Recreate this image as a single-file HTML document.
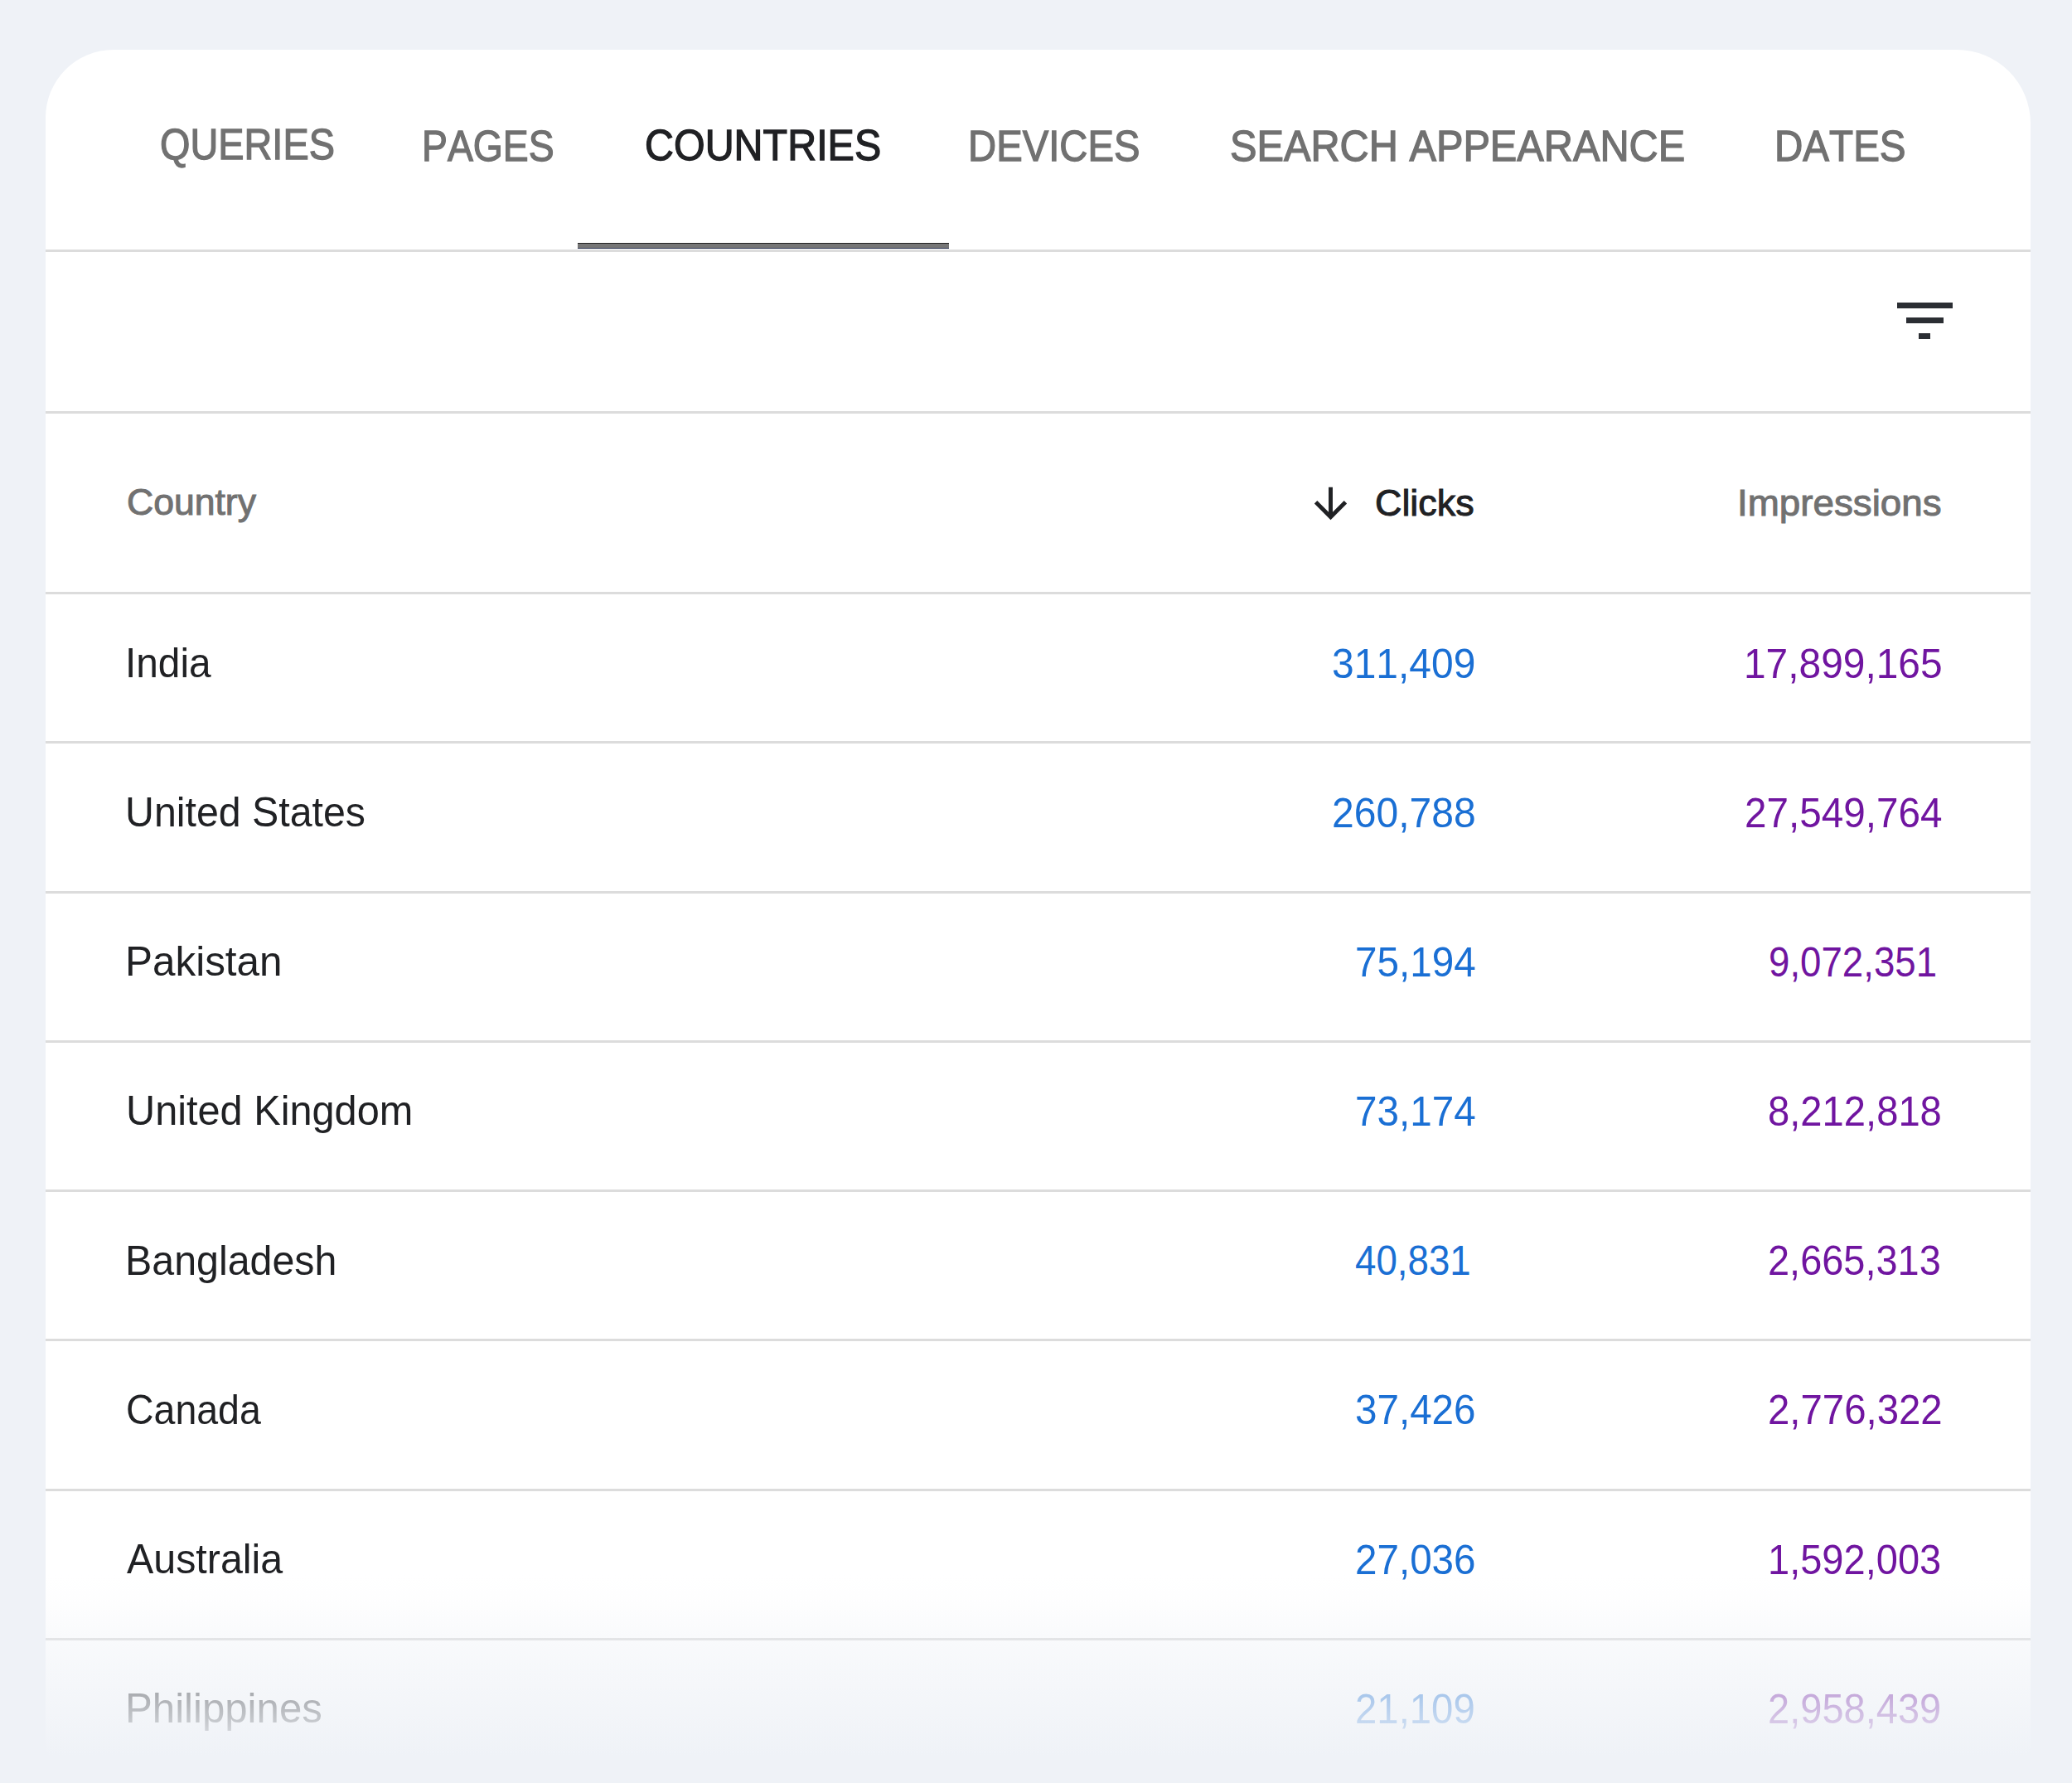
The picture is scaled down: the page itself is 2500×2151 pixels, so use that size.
<!DOCTYPE html>
<html><head><meta charset="utf-8"><title>Search Console - Countries</title>
<style>
html,body{margin:0;padding:0}
body{width:2500px;height:2151px;background:#eff2f7;position:relative;overflow:hidden;font-family:"Liberation Sans",sans-serif}
.card{position:absolute;left:55px;top:60px;width:2395px;height:2060px;background:#fff;border-radius:82px 89px 14px 14px}
.ln{position:absolute;left:55px;width:2395px;height:3px;background:#dcdcdc}
.tx{display:block;position:absolute;line-height:1;white-space:nowrap;font-kerning:none;transform-origin:0 0}
.ul{position:absolute;left:697px;top:293px;width:448px;height:5px;background:#767676;border-top:1px solid #222;border-bottom:1px solid #2b3350}
.bar{position:absolute;background:#2b2e33}
.fade{position:absolute;left:0;top:1898px;width:2500px;height:253px;background:linear-gradient(to bottom,rgba(239,242,247,0.000) 0px,rgba(239,242,247,0.080) 30px,rgba(239,242,247,0.420) 85px,rgba(239,242,247,0.660) 143px,rgba(239,242,247,0.800) 178px,rgba(239,242,247,1.000) 222px)}
</style></head><body>
<div class="card"></div>
<div class="ln" style="top:301.0px"></div><div class="ln" style="top:496.0px"></div><div class="ln" style="top:714.0px"></div><div class="ln" style="top:894.2px"></div><div class="ln" style="top:1074.5px"></div><div class="ln" style="top:1254.8px"></div><div class="ln" style="top:1435.0px"></div><div class="ln" style="top:1615.2px"></div><div class="ln" style="top:1795.5px"></div><div class="ln" style="top:1975.8px"></div>
<div class="ul"></div>
<div class="bar" style="left:2289px;top:365px;width:67px;height:7px"></div>
<div class="bar" style="left:2300px;top:383px;width:45px;height:7px"></div>
<div class="bar" style="left:2315px;top:402px;width:14px;height:7px"></div>
<svg style="position:absolute;left:1576px;top:578px" width="59" height="59" viewBox="0 0 24 24"><path fill="#202124" d="M20 12l-1.41-1.41L13 16.17V4h-2v12.17l-5.58-5.59L4 12l8 8 8-8z"/></svg>
<nav class="tabs">
<span class="tx" style="left:193.09px;top:149.35px;font-size:51.7px;color:#717171;transform:scaleX(0.9065);-webkit-text-stroke:1.3px #717171">QUERIES</span>
<span class="tx" style="left:509.31px;top:150.85px;font-size:51.7px;color:#717171;transform:scaleX(0.8966);-webkit-text-stroke:1.3px #717171">PAGES</span>
<span class="tx" style="left:778.13px;top:149.85px;font-size:51.7px;color:#202124;transform:scaleX(0.9369);-webkit-text-stroke:1.3px #202124">COUNTRIES</span>
<span class="tx" style="left:1167.66px;top:150.85px;font-size:51.7px;color:#717171;transform:scaleX(0.9143);-webkit-text-stroke:1.3px #717171">DEVICES</span>
<span class="tx" style="left:1483.76px;top:150.85px;font-size:51.7px;color:#717171;transform:scaleX(0.9420);-webkit-text-stroke:1.3px #717171">SEARCH APPEARANCE</span>
<span class="tx" style="left:2140.94px;top:150.85px;font-size:51.7px;color:#717171;transform:scaleX(0.9202);-webkit-text-stroke:1.3px #717171">DATES</span>
</nav>
<div class="thead"><span class="tx" style="left:152.51px;top:583.00px;font-size:45px;color:#717171;transform:scaleX(0.9898);-webkit-text-stroke:1.0px #717171">Country</span><span class="tx" style="left:1659.00px;top:584.20px;font-size:45px;color:#202124;transform:scaleX(0.9966);-webkit-text-stroke:1.0px #202124">Clicks</span><span class="tx" style="left:2095.95px;top:584.30px;font-size:45px;color:#717171;transform:scaleX(1.0167);-webkit-text-stroke:1.0px #717171">Impressions</span></div>
<div class="row"><span class="tx" style="left:151.18px;top:775.00px;font-size:50px;color:#202124;transform:scaleX(0.9562)">India</span><span class="tx" style="left:1607.08px;top:775.60px;font-size:50px;color:#1a6fd4;transform:scaleX(0.9593)">311,409</span><span class="tx" style="left:2104.13px;top:775.60px;font-size:50px;color:#7015a0;transform:scaleX(0.9573)">17,899,165</span></div>
<div class="row"><span class="tx" style="left:150.90px;top:955.15px;font-size:50px;color:#202124;transform:scaleX(0.9659)">United States</span><span class="tx" style="left:1607.08px;top:955.75px;font-size:50px;color:#1a6fd4;transform:scaleX(0.9605)">260,788</span><span class="tx" style="left:2105.09px;top:955.75px;font-size:50px;color:#7015a0;transform:scaleX(0.9534)">27,549,764</span></div>
<div class="row"><span class="tx" style="left:151.05px;top:1135.30px;font-size:50px;color:#202124;transform:scaleX(0.9886)">Pakistan</span><span class="tx" style="left:1635.19px;top:1135.90px;font-size:50px;color:#1a6fd4;transform:scaleX(0.9527)">75,194</span><span class="tx" style="left:2134.17px;top:1135.90px;font-size:50px;color:#7015a0;transform:scaleX(0.9132)">9,072,351</span></div>
<div class="row"><span class="tx" style="left:151.58px;top:1315.45px;font-size:50px;color:#202124;transform:scaleX(0.9734)">United Kingdom</span><span class="tx" style="left:1635.09px;top:1316.05px;font-size:50px;color:#1a6fd4;transform:scaleX(0.9533)">73,174</span><span class="tx" style="left:2132.91px;top:1316.05px;font-size:50px;color:#7015a0;transform:scaleX(0.9434)">8,212,818</span></div>
<div class="row"><span class="tx" style="left:151.13px;top:1495.60px;font-size:50px;color:#202124;transform:scaleX(0.9669)">Bangladesh</span><span class="tx" style="left:1635.09px;top:1496.20px;font-size:50px;color:#1a6fd4;transform:scaleX(0.9133)">40,831</span><span class="tx" style="left:2133.12px;top:1496.20px;font-size:50px;color:#7015a0;transform:scaleX(0.9388)">2,665,313</span></div>
<div class="row"><span class="tx" style="left:152.04px;top:1675.75px;font-size:50px;color:#202124;transform:scaleX(0.9295)">Canada</span><span class="tx" style="left:1635.10px;top:1676.35px;font-size:50px;color:#1a6fd4;transform:scaleX(0.9517)">37,426</span><span class="tx" style="left:2133.11px;top:1676.35px;font-size:50px;color:#7015a0;transform:scaleX(0.9472)">2,776,322</span></div>
<div class="row"><span class="tx" style="left:152.50px;top:1855.90px;font-size:50px;color:#202124;transform:scaleX(0.9677)">Australia</span><span class="tx" style="left:1635.10px;top:1856.50px;font-size:50px;color:#1a6fd4;transform:scaleX(0.9517)">27,036</span><span class="tx" style="left:2133.18px;top:1856.50px;font-size:50px;color:#7015a0;transform:scaleX(0.9404)">1,592,003</span></div>
<div class="row"><span class="tx" style="left:151.47px;top:2036.05px;font-size:50px;color:#202124;transform:scaleX(0.9835)">Philippines</span><span class="tx" style="left:1635.11px;top:2036.65px;font-size:50px;color:#1a6fd4;transform:scaleX(0.9463)">21,109</span><span class="tx" style="left:2133.12px;top:2036.65px;font-size:50px;color:#7015a0;transform:scaleX(0.9406)">2,958,439</span></div>
<div class="fade"></div>
</body></html>
